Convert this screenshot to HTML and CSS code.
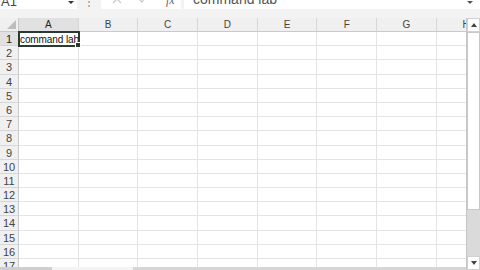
FILE: index.html
```html
<!DOCTYPE html>
<html lang="en">
<head>
    <meta charset="UTF-8">
    <meta name="viewport" content="width=device-width, initial-scale=1.0">
    <title>Sheet1</title>
    <link rel="stylesheet" href="styles.css">
</head>
<body>
    <div class="app">
        <div class="formula-bar">
            <div class="name-box">
                <span class="name-text">A1</span>
                <svg class="caret" width="6" height="4" viewBox="0 0 6 4"><path d="M0 0h6L3 3z" fill="#333"/></svg>
            </div>
            <div class="bar-dots">&#8942;</div>
            <div class="bar-buttons">
                <svg class="bar-icon" width="10" height="10" viewBox="0 0 10 10"><path d="M1 1l8 8M9 1l-8 8" stroke="#c8c8c8" stroke-width="1.2" fill="none"/></svg>
                <svg class="bar-icon" width="10" height="10" viewBox="0 0 10 10"><path d="M1 5l3 3l5-7" stroke="#c8c8c8" stroke-width="1.2" fill="none"/></svg>
                <span class="fx">fx</span>
            </div>
            <div class="formula-input">
                <span class="formula-text">command lab</span>
                <svg class="caret caret-right" width="6" height="4" viewBox="0 0 6 4"><path d="M0 0h6L3 3z" fill="#555"/></svg>
            </div>
        </div>

        <div class="sheet">
            <div class="grid-area">
                <div class="grid" id="grid"></div>
                <div class="hscroll">
                    <div class="tab-strip"></div>
                    <div class="hscroll-gap"></div>
                    <div class="hscroll-track"></div>
                </div>
            </div>
            <div class="vscroll">
                <div class="vbutton"><svg width="6" height="4" viewBox="0 0 6 4"><path d="M0 4h6L3 0z" fill="#444"/></svg></div>
                <div class="vthumb"></div>
                <div class="vtrack"></div>
                <div class="vbutton"><svg width="6" height="4" viewBox="0 0 6 4"><path d="M0 0h6L3 4z" fill="#444"/></svg></div>
            </div>
        </div>
    </div>

    <script>
        const grid = document.getElementById('grid');
        const cols = ['A', 'B', 'C', 'D', 'E', 'F', 'G', 'H'];
        const rows = 17;

        // header row
        const corner = document.createElement('div');
        corner.className = 'corner';
        grid.appendChild(corner);
        cols.forEach((c, i) => {
            const h = document.createElement('div');
            h.className = 'col-head' + (i === 0 ? ' selected' : '');
            h.textContent = c;
            grid.appendChild(h);
        });

        for (let r = 1; r <= rows; r++) {
            const rh = document.createElement('div');
            rh.className = 'row-head' + (r === 1 ? ' selected' : '');
            rh.textContent = r;
            grid.appendChild(rh);
            cols.forEach((c, i) => {
                const cell = document.createElement('div');
                cell.className = 'cell';
                if (r === 1 && i === 0) {
                    cell.className += ' active';
                    cell.textContent = 'command lab';
                }
                grid.appendChild(cell);
            });
        }
    </script>
</body>
</html>
```

FILE: styles.css
```css
html, body {
    margin: 0;
    padding: 0;
    background: #ffffff;
}
.app {
    width: 480px;
    height: 270px;
    overflow: hidden;
    display: flex;
    flex-direction: column;
    font-family: "Liberation Sans", Arial, sans-serif;
}

/* formula bar, its top is cut off */
.formula-bar {
    height: 18px;
    flex: 0 0 auto;
    display: flex;
    align-items: flex-start;
    background: #f3f3f3;
}
.name-box {
    width: 77px;
    height: 9px;
    background: #ffffff;
    display: flex;
    align-items: flex-start;
    justify-content: space-between;
    overflow: hidden;
}
.name-text {
    font-size: 13px;
    line-height: 13px;
    margin-top: -5px;
    margin-left: 1px;
    color: #444;
}
.caret {
    margin-top: 1px;
    margin-right: 3px;
}
.bar-dots {
    width: 24px;
    height: 9px;
    overflow: hidden;
    text-align: center;
    font-size: 12px;
    line-height: 12px;
    margin-top: -4px;
    color: #999;
    padding-top: 4px;
}
.bar-buttons {
    width: 80px;
    height: 9px;
    background: #ffffff;
    display: flex;
    align-items: flex-start;
    gap: 16px;
    padding-left: 11px;
    box-sizing: border-box;
    overflow: hidden;
}
.bar-icon {
    margin-top: -6px;
}
.fx {
    font-family: "Liberation Serif", serif;
    font-style: italic;
    font-size: 12px;
    line-height: 12px;
    margin-top: -6px;
    margin-left: 2px;
    color: #666;
}
.formula-input {
    flex: 1;
    margin-left: 3px;
    height: 9px;
    background: #ffffff;
    display: flex;
    align-items: flex-start;
    justify-content: space-between;
    overflow: hidden;
}
.formula-text {
    font-size: 14px;
    line-height: 14px;
    margin-top: -8px;
    margin-left: 9px;
    color: #555;
}
.caret-right {
    margin-right: 7px;
}

/* sheet */
.sheet {
    flex: 1;
    display: flex;
    min-height: 0;
}
.grid-area {
    width: 466px;
    display: flex;
    flex-direction: column;
    min-height: 0;
}
.grid {
    flex: 1;
    min-height: 0;
    overflow: hidden;
    display: grid;
    grid-template-columns: 19px repeat(8, 59.7px);
    grid-template-rows: 14px;
    grid-auto-rows: 14.2px;
    font-size: 10px;
}
.corner {
    background: #f0f0f0;
    border-right: 1px solid #c9c9c9;
    border-bottom: 1px solid #c9c9c9;
    position: relative;
}
.corner::after {
    content: '';
    position: absolute;
    right: 2px;
    bottom: 2px;
    border-left: 9px solid transparent;
    border-bottom: 9px solid #bdbdbd;
}
.col-head {
    background: #f0f0f0;
    border-right: 1px solid #d6d6d6;
    border-bottom: 1px solid #c9c9c9;
    color: #444;
    text-align: center;
    line-height: 13px;
}
.row-head {
    background: #f0f0f0;
    border-right: 1px solid #c9c9c9;
    border-bottom: 1px solid #d6d6d6;
    color: #444;
    text-align: center;
    line-height: 14px;
    font-size: 11px;
}
.col-head.selected, .row-head.selected {
    background: #e1e1e1;
    color: #222;
}
.cell {
    border-right: 1px solid #e4e4e4;
    border-bottom: 1px solid #e4e4e4;
    line-height: 13px;
    white-space: nowrap;
}
.cell.active {
    position: relative;
    outline: 2px solid #2a3a30;
    outline-offset: -1px;
    color: #111;
    font-size: 10px;
    letter-spacing: -0.1px;
    line-height: 15px;
    padding-left: 1px;
    z-index: 1;
}
.cell.active::after {
    content: '';
    position: absolute;
    right: -3px;
    bottom: -3px;
    width: 4px;
    height: 4px;
    background: #2a3a30;
    border: 1px solid #fff;
}

.hscroll {
    height: 3px;
    flex: 0 0 auto;
    display: flex;
}
.tab-strip {
    width: 52px;
    background: #cfcfcf;
}
.hscroll-gap {
    width: 81px;
    background: #f4f4f4;
}
.hscroll-track {
    flex: 1;
    background: #d6d6d6;
}

.vscroll {
    width: 14px;
    display: flex;
    flex-direction: column;
    background: #dadada;
    border-left: 1px solid #c6c6c6;
    box-sizing: border-box;
}
.vbutton {
    height: 14px;
    flex: 0 0 auto;
    background: #ffffff;
    border: 1px solid #d0d0d0;
    box-sizing: border-box;
    display: flex;
    align-items: center;
    justify-content: center;
}
.vthumb {
    height: 178px;
    flex: 0 0 auto;
    background: #ffffff;
    border: 1px solid #c8c8c8;
    box-sizing: border-box;
}
.vtrack {
    flex: 1;
}
```
